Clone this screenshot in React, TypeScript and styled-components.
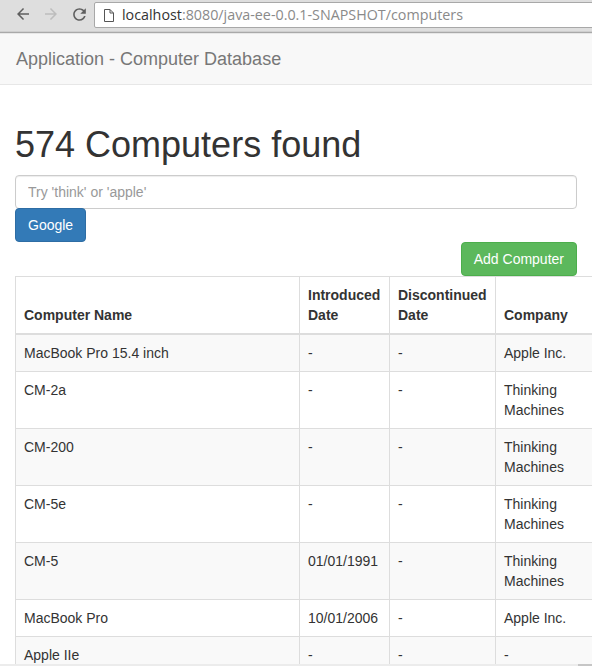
import React from "react";
import styled, { createGlobalStyle } from "styled-components";

const Global = createGlobalStyle`
  html, body { margin: 0; padding: 0; background: #fff; }
  body { font-family: "Liberation Sans", Arial, sans-serif; font-size: 14px; line-height: 1.42857; color: #333; }
  * { box-sizing: border-box; }
`;

const Window = styled.div`
  width: 592px;
  height: 666px;
  display: flex;
  flex-direction: column;
  overflow: hidden;
`;

const ChromeBar = styled.div`
  height: 33px;
  flex: none;
  background: #dedede;
  border-bottom: 1px solid #a9a9a9;
  box-shadow: inset 0 -1px 0 #cfcfcf;
  display: flex;
  align-items: flex-start;
  padding: 2px 0 0 9px;
`;

const NavIcon = styled.span<{ $dim?: boolean }>`
  width: 28px;
  height: 24px;
  display: flex;
  align-items: center;
  justify-content: center;
  color: ${(p) => (p.$dim ? "#bdbdbd" : "#5f5f5f")};
`;

const Omnibox = styled.div`
  margin-left: 1px;
  flex: 1;
  height: 26px;
  margin-right: -10px;
  background: #fff;
  border: 1px solid #a8a8a8;
  border-radius: 2px;
  display: flex;
  align-items: center;
  padding-left: 9px;
  font-family: "Open Sans", "DejaVu Sans", sans-serif;
  font-size: 14.3px;
  white-space: nowrap;
`;

const Host = styled.span`
  color: #333;
  margin-left: 8px;
`;

const Path = styled.span`
  color: #8a8a8a;
`;

const Viewport = styled.div`
  flex: 1;
  overflow: hidden;
  position: relative;
`;

const ScrollTrack = styled.div`
  height: 2px;
  flex: none;
  background: #ececec;
  display: flex;
  justify-content: flex-end;
`;

const ScrollThumb = styled.div`
  width: 14px;
  background: #c6c6c6;
`;

const Navbar = styled.div`
  min-height: 52px;
  background: #f8f8f8;
  border-top: 1px solid #e7e7e7;
  border-bottom: 1px solid #e7e7e7;
  margin-bottom: 20px;
`;

const Brand = styled.div`
  padding: 15px 16px;
  font-size: 18px;
  line-height: 20px;
  color: #777;
`;

const Container = styled.div`
  display: flow-root;
  padding: 0 15px;
`;

const Title = styled.h1`
  margin: 20px 0 10px;
  font-size: 36px;
  font-weight: 500;
  line-height: 1.1;
  color: #333;
`;

const SearchInput = styled.input`
  display: block;
  width: 100%;
  height: 34px;
  padding: 6px 12px;
  font-family: inherit;
  font-size: 14px;
  color: #555;
  border: 1px solid #ccc;
  border-radius: 4px;
  box-shadow: inset 0 1px 1px rgba(0, 0, 0, 0.075);
  margin: 0 0 -1px;
  &::placeholder { color: #999; }
`;

const Btn = styled.button<{ $variant: "primary" | "success" }>`
  display: inline-block;
  height: 34px;
  padding: 6px 12px;
  font-family: inherit;
  font-size: 14px;
  line-height: 20px;
  color: #fff;
  border-radius: 4px;
  border: 1px solid ${(p) => (p.$variant === "primary" ? "#2e6da4" : "#4cae4c")};
  background: ${(p) => (p.$variant === "primary" ? "#337ab7" : "#5cb85c")};
`;

const ActionRow = styled.div`
  display: flex;
  justify-content: flex-end;
`;

const Table = styled.table`
  border-collapse: collapse;
  border-spacing: 0;
  table-layout: fixed;
  width: 684px;
  border: 1px solid #ddd;
`;

const Th = styled.th`
  padding: 8px;
  text-align: left;
  vertical-align: bottom;
  font-weight: bold;
  line-height: 20px;
  border: 1px solid #ddd;
  border-bottom: 2px solid #ddd;
`;

const Tr = styled.tr<{ $striped: boolean }>`
  background: ${(p) => (p.$striped ? "#f9f9f9" : "#fff")};
`;

const Td = styled.td`
  padding: 8px;
  vertical-align: top;
  line-height: 20px;
  border: 1px solid #ddd;
`;

const CompanyText = styled.div`
  width: 84px;
`;

const rows = [
  ["MacBook Pro 15.4 inch", "-", "-", "Apple Inc."],
  ["CM-2a", "-", "-", "Thinking Machines"],
  ["CM-200", "-", "-", "Thinking Machines"],
  ["CM-5e", "-", "-", "Thinking Machines"],
  ["CM-5", "01/01/1991", "-", "Thinking Machines"],
  ["MacBook Pro", "10/01/2006", "-", "Apple Inc."],
  ["Apple IIe", "-", "-", "-"],
];

export default function App() {
  return (
    <Window>
      <Global />
      <ChromeBar>
        <NavIcon>
          <svg width="18" height="18" viewBox="0 0 24 24" fill="currentColor">
            <path d="M20 11H7.83l5.59-5.59L12 4l-8 8 8 8 1.41-1.41L7.83 13H20v-2z" />
          </svg>
        </NavIcon>
        <NavIcon $dim>
          <svg width="18" height="18" viewBox="0 0 24 24" fill="currentColor">
            <path d="M12 4l-1.41 1.41L16.17 11H4v2h12.17l-5.58 5.59L12 20l8-8z" />
          </svg>
        </NavIcon>
        <NavIcon>
          <svg width="19" height="19" viewBox="0 0 24 24" fill="currentColor">
            <path d="M17.65 6.35C16.2 4.9 14.21 4 12 4c-4.42 0-7.990 3.58-7.99 8s3.57 8 7.99 8c3.73 0 6.84-2.55 7.73-6h-2.08c-.82 2.33-3.04 4-5.65 4-3.31 0-6-2.690-6-6s2.69-6 6-6c1.66 0 3.14.69 4.22 1.78L13 11h7V4l-2.35 2.35z" />
          </svg>
        </NavIcon>
        <Omnibox>
          <svg width="10" height="13" viewBox="0 0 10 13" fill="none" stroke="#555" strokeWidth="1">
            <path d="M0.5 0.5h5.5l3.5 3.5v8.5h-9z M6 0.5v3.5h3.5" />
          </svg>
          <Host>localhost</Host>
          <Path>:8080/java-ee-0.0.1-SNAPSHOT/computers</Path>
        </Omnibox>
      </ChromeBar>
      <Viewport>
        <Navbar>
          <Brand>Application - Computer Database</Brand>
        </Navbar>
        <Container>
          <Title>574 Computers found</Title>
          <SearchInput placeholder="Try 'think' or 'apple'" />
          <Btn $variant="primary">Google</Btn>
          <ActionRow>
            <Btn $variant="success">Add Computer</Btn>
          </ActionRow>
          <Table>
            <colgroup>
              <col style={{ width: 284 }} />
              <col style={{ width: 90 }} />
              <col style={{ width: 106 }} />
              <col style={{ width: 204 }} />
            </colgroup>
            <thead>
              <tr>
                <Th>Computer Name</Th>
                <Th>Introduced Date</Th>
                <Th>Discontinued Date</Th>
                <Th>
                  <CompanyText>Company</CompanyText>
                </Th>
              </tr>
            </thead>
            <tbody>
              {rows.map((r, i) => (
                <Tr key={i} $striped={i % 2 === 0}>
                  <Td>{r[0]}</Td>
                  <Td>{r[1]}</Td>
                  <Td>{r[2]}</Td>
                  <Td>
                    <CompanyText>{r[3]}</CompanyText>
                  </Td>
                </Tr>
              ))}
            </tbody>
          </Table>
        </Container>
      </Viewport>
      <ScrollTrack>
        <ScrollThumb />
      </ScrollTrack>
    </Window>
  );
}
